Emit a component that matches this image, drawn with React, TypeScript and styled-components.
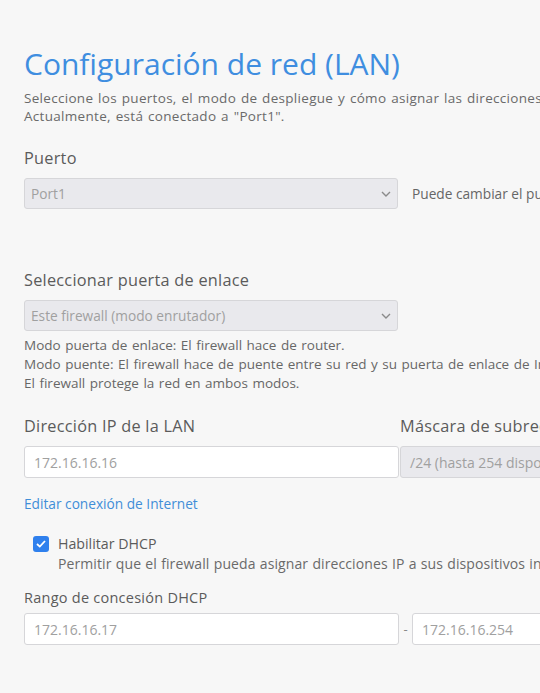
import React from "react";
import styled, { createGlobalStyle } from "styled-components";

const Global = createGlobalStyle`
  html, body { margin: 0; padding: 0; background: #f7f7f7; overflow: hidden; }
  body { font-family: "Open Sans", "Noto Sans", sans-serif; }
`;

const Page = styled.div`
  width: 1000px;
  padding: 45px 0 40px 24px;
  color: #5a5a5a;
`;

const Title = styled.h1`
  margin: 0;
  font-size: 30px;
  line-height: 38px;
  font-weight: 400;
  color: #3f8ee0;
`;

const Lead = styled.p`
  margin: 6px 0 0;
  font-size: 13.5px;
  line-height: 18px;
  letter-spacing: 0.3px;
  word-spacing: 1px;
  color: #6a6a6a;
  white-space: nowrap;
`;

const Section = styled.div<{ $mt: number }>`
  margin-top: ${(p) => p.$mt}px;
`;

const Label = styled.div<{ $size?: number }>`
  font-size: ${(p) => p.$size ?? 16.3}px;
  line-height: 20px;
  letter-spacing: 0.25px;
  color: #5b5b5b;
  margin-bottom: ${(p) => (p.$size ? 5 : 10)}px;
  white-space: nowrap;
`;

const Row = styled.div`
  display: flex;
  align-items: center;
`;

const Col = styled.div<{ $w: number }>`
  width: ${(p) => p.$w}px;
  flex: none;
`;

const SelectBox = styled.div`
  box-sizing: border-box;
  width: 374px;
  height: 31px;
  display: flex;
  align-items: center;
  justify-content: space-between;
  padding: 0 6px 0 6px;
  background: #e9e9ed;
  border: 1px solid #d6d6d9;
  border-radius: 3px;
  font-size: 13.7px;
  color: #a0a0a0;
  flex: none;
`;

const SideNote = styled.span`
  margin-left: 14px;
  font-size: 13.7px;
  color: #666;
  white-space: nowrap;
`;

const Input = styled.div<{ $disabled?: boolean; $w?: number }>`
  box-sizing: border-box;
  width: ${(p) => (p.$w ? `${p.$w}px` : "auto")};
  height: 32px;
  display: flex;
  align-items: center;
  padding: 0 9px;
  background: ${(p) => (p.$disabled ? "#e9e9ed" : "#ffffff")};
  border: 1px solid #d6d6d9;
  border-radius: 3px;
  font-size: 14px;
  color: #a0a0a0;
  white-space: nowrap;
  overflow: hidden;
  flex: none;
`;

const Help = styled.div`
  margin-top: 5px;
  font-size: 13.5px;
  line-height: 19px;
  word-spacing: 1px;
  color: #676767;
  white-space: nowrap;
`;

const Link = styled.a`
  display: inline-block;
  margin-top: 16px;
  font-size: 13.7px;
  color: #3f8ed8;
  text-decoration: none;
`;

const CheckRow = styled.div`
  display: flex;
  align-items: flex-start;
  margin-top: 20px;
  padding-left: 9px;
`;

const Box = styled.span`
  width: 16px;
  height: 16px;
  border-radius: 3px;
  background: #2f80ed;
  display: flex;
  align-items: center;
  justify-content: center;
  margin-top: 2px;
  flex: none;
`;

const CheckText = styled.div`
  margin-left: 9px;
  font-size: 14.2px;
  line-height: 20px;
  color: #5b5b5b;
`;

const CheckSub = styled.div`
  font-size: 14px;
  line-height: 20px;
  letter-spacing: 0.1px;
  word-spacing: 0.5px;
  color: #6a6a6a;
  white-space: nowrap;
`;

const Dash = styled.span`
  width: 13px;
  text-align: center;
  font-size: 13px;
  color: #888;
  flex: none;
`;

const Chevron = () => (
  <svg width="10" height="6" viewBox="0 0 10 6">
    <path d="M1 1l4 4 4-4" fill="none" stroke="#8a8a8a" strokeWidth="1.4" />
  </svg>
);

export default function App() {
  return (
    <>
      <Global />
      <Page>
        <Title>Configuración de red (LAN)</Title>
        <Lead>
          Seleccione los puertos, el modo de despliegue y cómo asignar las direcciones IP a sus dispositivos.
          <br />
          Actualmente, está conectado a "Port1".
        </Lead>

        <Section $mt={23}>
          <Label>Puerto</Label>
          <Row>
            <SelectBox>
              <span>Port1</span>
              <Chevron />
            </SelectBox>
            <SideNote>Puede cambiar el puerto más adelante.</SideNote>
          </Row>
        </Section>

        <Section $mt={61}>
          <Label>Seleccionar puerta de enlace</Label>
          <SelectBox>
            <span>Este firewall (modo enrutador)</span>
            <Chevron />
          </SelectBox>
          <Help>
            Modo puerta de enlace: El firewall hace de router.
            <br />
            Modo puente: El firewall hace de puente entre su red y su puerta de enlace de Internet existente.
            <br />
            El firewall protege la red en ambos modos.
          </Help>
        </Section>

        <Section $mt={23}>
          <Row>
            <Col $w={376}>
              <Label>Dirección IP de la LAN</Label>
              <Input $w={375}>172.16.16.16</Input>
            </Col>
            <Col $w={300}>
              <Label>Máscara de subred</Label>
              <Input $disabled $w={300}>/24 (hasta 254 dispositivos)</Input>
            </Col>
          </Row>
          <Link href="#">Editar conexión de Internet</Link>
        </Section>

        <CheckRow>
          <Box>
            <svg width="10" height="8" viewBox="0 0 10 8">
              <path d="M1 4l2.8 2.6L9 1" fill="none" stroke="#fff" strokeWidth="1.8" />
            </svg>
          </Box>
          <CheckText>
            Habilitar DHCP
            <CheckSub>Permitir que el firewall pueda asignar direcciones IP a sus dispositivos internos.</CheckSub>
          </CheckText>
        </CheckRow>

        <Section $mt={14}>
          <Label $size={14.5}>Rango de concesión DHCP</Label>
          <Row>
            <Input $w={375}>172.16.16.17</Input>
            <Dash>-</Dash>
            <Input $w={300}>172.16.16.254</Input>
          </Row>
        </Section>
      </Page>
    </>
  );
}
